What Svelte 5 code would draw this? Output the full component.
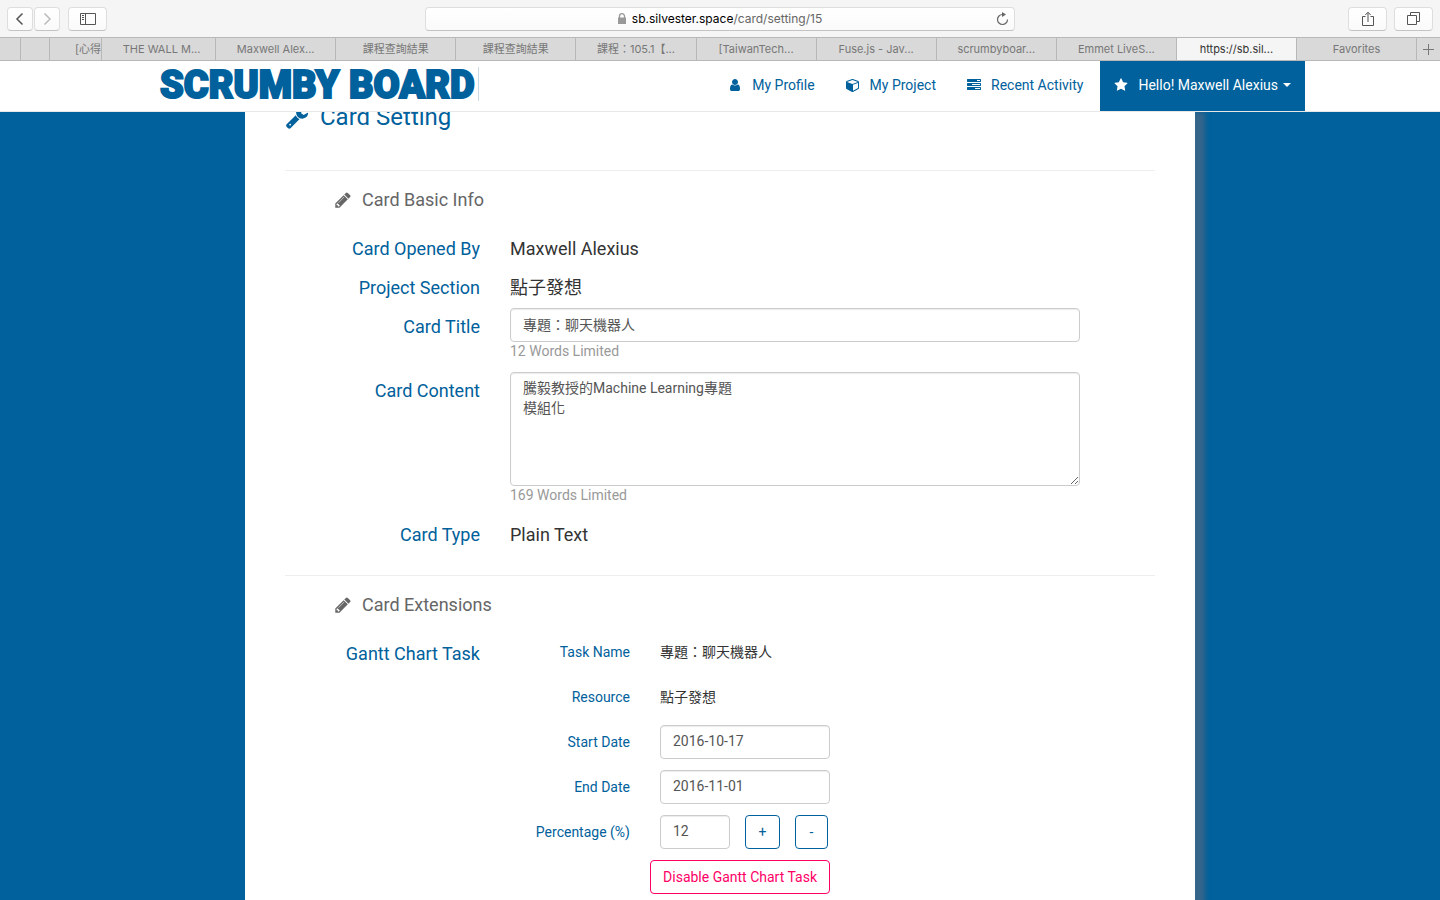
<script>
  const tabs = [
    { text: '課程查詢結果' },
    { text: '課程查詢結果' },
    { text: '課程：105.1【...' },
    { text: '[TaiwanTech...' },
    { text: 'Fuse.js - Jav...' },
    { text: 'scrumbyboar...' },
    { text: 'Emmet LiveS...' },
    { text: 'https://sb.sil...', active: true },
    { text: 'Favorites' }
  ];
  let title = $state('專題：聊天機器人');
  let content = $state('騰毅教授的Machine Learning專題\n模組化');
  let start = $state('2016-10-17');
  let end = $state('2016-11-01');
  let percent = $state(12);

  const icons = {
    user: 'M1280 1399q0 109-62.5 187t-150.5 78h-854q-88 0-150.5-78t-62.5-187q0-85 8.5-160.5t31.5-152 58.5-131 94-89 134.5-34.5q131 128 313 128t313-128q76 0 134.5 34.5t94 89 58.5 131 31.5 152 8.5 160.5zm-256-887q0 159-112.5 271.5t-271.5 112.5-271.5-112.5-112.5-271.5 112.5-271.5 271.5-112.5 271.5 112.5 112.5 271.5z',
    cube: 'M896 1629l640-349v-636l-640 233v752zm-64-865l698-254-698-254-698 254zm832-252v768q0 35-18 65t-49 47l-704 384q-28 16-61 16t-61-16l-704-384q-31-17-49-47t-18-65v-768q0-40 23-73t61-47l704-256q22-8 44-8t44 8l704 256q38 14 61 47t23 73z',
    tasks: 'M1024 1408h640v-128h-640v128zm-384-512h1024v-128h-1024v128zm640-512h384v-128h-384v128zm512 832v256q0 26-19 45t-45 19h-1664q-26 0-45-19t-19-45v-256q0-26 19-45t45-19h1664q26 0 45 19t19 45zm0-512v256q0 26-19 45t-45 19h-1664q-26 0-45-19t-19-45v-256q0-26 19-45t45-19h1664q26 0 45 19t19 45zm0-512v256q0 26-19 45t-45 19h-1664q-26 0-45-19t-19-45v-256q0-26 19-45t45-19h1664q26 0 45 19t19 45z',
    star: 'M1728 647q0 22-26 48l-363 354 86 500q1 7 1 20 0 21-10.5 35.5t-30.5 14.5q-19 0-40-12l-449-236-449 236q-22 12-40 12-21 0-31.5-14.5t-10.5-35.5q0-6 2-20l86-500-364-354q-25-27-25-48 0-37 56-46l502-73 225-455q19-41 49-41t49 41l225 455 502 73q56 9 56 46z',
    pencil: 'M491 1536l91-91-235-235-91 91v107h128v128h107zm523-928q0-22-22-22-10 0-17 7l-542 542q-7 7-7 17 0 22 22 22 10 0 17-7l542-542q7-7 7-17zm-54-192l416 416-832 832h-416v-416zm683 96q0 53-37 90l-166 166-416-416 166-165q36-38 90-38 53 0 91 38l235 234q37 39 37 91z',
    wrench: 'M448 1472q0-26-19-45t-45-19-45 19-19 45 19 45 45 19 45-19 19-45zm644-420l-682 682q-37 37-90 37-52 0-91-37l-106-108q-38-36-38-90 0-53 38-91l681-681q39 98 114.5 173.5t173.5 114.5zm634-435q0 39-23 106-47 134-164.5 217.5t-258.5 83.5q-185 0-316.5-131.5t-131.5-316.5 131.5-316.5 316.5-131.5q58 0 121.5 16.5t107.5 46.5q16 11 16 28t-16 28l-293 169v224l193 107q5-3 79-48.5t135.5-81 70.5-35.5q15 0 23.5 10t8.5 25z'
  };
</script>

{#snippet icon(name, size, width = 1792)}
  <svg class="icon" height={size} width={Math.round((size * width) / 1792)} viewBox="0 0 {width} 1792" aria-hidden="true">
    <path d={icons[name]} fill="currentColor" />
  </svg>
{/snippet}

<div class="window">
  <div class="toolbar">
    <div class="tools">
      <div class="pair">
        <button class="tool" aria-label="Back">
          <svg width="10" height="14" viewBox="0 0 10 14"><path d="M7.5 1.5 2 7l5.500 5.500" fill="none" stroke="#555" stroke-width="1.500" /></svg>
        </button>
        <button class="tool" aria-label="Forward">
          <svg width="10" height="14" viewBox="0 0 10 14"><path d="M2.500 1.500 8 7l-5.500 5.500" fill="none" stroke="#bbb" stroke-width="1.500" /></svg>
        </button>
      </div>
      <button class="tool wide" aria-label="Sidebar">
        <svg width="16" height="12" viewBox="0 0 16 12" fill="none" stroke="#555">
          <path d="M.5.5h15v11H.5zM5.500.5v11M2 2.500h2M2 4.500h2M2 6.500h2" />
        </svg>
      </button>
    </div>
    <div class="address">
      <button class="url">
        <svg width="8" height="11" viewBox="0 0 8 11"><path d="M1.500 5V3.200a2.500 2.500 0 0 1 5 0V5" fill="none" stroke="#999" stroke-width="1.300" /><path d="M0 4.500h8V11H0z" fill="#999" /></svg>
        <span><b>sb.silvester.space</b>/card/setting/15</span>
      </button>
      <button class="reload" aria-label="Reload">
        <svg width="13" height="14" viewBox="0 0 13 14"><path d="M6.500 2.500a5 5 0 1 0 5 5" fill="none" stroke="#666" stroke-width="1.200" /><path d="M6 0l4 2.500L6 5z" fill="#666" /></svg>
      </button>
    </div>
    <div class="tools end">
      <button class="tool wide" aria-label="Share">
        <svg width="12" height="16" viewBox="0 0 12 16" fill="none" stroke="#555"><path d="M3.500 5.500h-3v9h11v-9h-3M6 11V1.500M3.300 4 6 1.200 8.700 4" /></svg>
      </button>
      <button class="tool wide" aria-label="Show all tabs">
        <svg width="13" height="13" viewBox="0 0 13 13" fill="none" stroke="#555"><path d="M.5 3.500h9v9h-9zM3.500 3.500v-3h9v9h-3" /></svg>
      </button>
    </div>
  </div>

  <div class="tabs">
    <button class="tab s1" aria-label="Stacked tab"></button>
    <button class="tab s2" aria-label="Stacked tab"></button>
    <button class="tab s3">[心得</button>
    <button class="tab first">THE WALL M...</button>
    <button class="tab">Maxwell Alex...</button>
    {#each tabs as tab}
      <button class="tab" class:active={tab.active}>{tab.text}</button>
    {/each}
    <button class="plus" aria-label="New tab">
      <svg width="11" height="11" viewBox="0 0 11 11"><path d="M5.500 0v11M0 5.500h11" stroke="#777" /></svg>
    </button>
  </div>

  <header class="navbar">
    <div class="nav-inner">
      <a class="brand" href="#home">SCRUMBY BOARD</a>
      <nav>
        <a href="#profile"><span class="slot">{@render icon('user', 14, 1280)}</span>My Profile</a>
        <a href="#project"><span class="slot">{@render icon('cube', 14)}</span>My Project</a>
        <a href="#activity"><span class="slot">{@render icon('tasks', 14)}</span>Recent Activity</a>
        <a class="hello" href="#account"><span class="slot">{@render icon('star', 14)}</span>Hello! Maxwell Alexius<i class="caret"></i></a>
      </nav>
    </div>
  </header>

  <div class="page">
    <main class="sheet">
      <h1>{@render icon('wrench', 24)}Card Setting</h1>
      <hr />
      <h2>{@render icon('pencil', 18)}Card Basic Info</h2>
      <div class="row">
        <span class="label">Card Opened By</span>
        <span class="value">Maxwell Alexius</span>
      </div>
      <div class="row">
        <span class="label">Project Section</span>
        <span class="value">點子發想</span>
      </div>
      <div class="row tall">
        <label class="label" for="title">Card Title</label>
        <div>
          <input id="title" type="text" bind:value={title} />
          <p class="hint">12 Words Limited</p>
        </div>
      </div>
      <div class="row tall">
        <label class="label" for="content">Card Content</label>
        <div>
          <textarea id="content" rows="5" bind:value={content}></textarea>
          <p class="hint">169 Words Limited</p>
        </div>
      </div>
      <div class="row">
        <span class="label">Card Type</span>
        <span class="value">Plain Text</span>
      </div>
      <hr class="second" />
      <h2>{@render icon('pencil', 18)}Card Extensions</h2>
      <div class="row">
        <span class="label">Gantt Chart Task</span>
        <div class="task">
          <span class="sub">Task Name</span>
          <span class="text">專題：聊天機器人</span>
          <span class="sub">Resource</span>
          <span class="text">點子發想</span>
          <label class="sub" for="start">Start Date</label>
          <input id="start" type="text" bind:value={start} />
          <label class="sub" for="end">End Date</label>
          <input id="end" type="text" bind:value={end} />
          <label class="sub" for="percent">Percentage (%)</label>
          <div class="percent">
            <input id="percent" type="text" bind:value={percent} />
            <button class="btn" onclick={() => percent++}>+</button>
            <button class="btn" onclick={() => percent--}>-</button>
          </div>
          <div class="actions"><button class="btn danger">Disable Gantt Chart Task</button></div>
        </div>
      </div>
    </main>
  </div>
</div>

<style>
  :global(body) { background: #00619c; overflow: hidden; }
  .window {
    height: 100vh;
    display: flex;
    flex-direction: column;
    font: 14px/20px Roboto, 'Noto Sans CJK TC', sans-serif;
    color: #333;
  }
  * { box-sizing: border-box; }
  button, input, textarea { font: inherit; margin: 0; }
  svg { display: block; flex: none; }
  a { text-decoration: none; }

  .toolbar {
    flex: none;
    display: grid;
    grid-template-columns: 1fr minmax(0, 590px) 1fr;
    align-items: center;
    height: 38px;
    padding: 0 7px;
    background: #f5f5f5;
    border-bottom: 1px solid #b8b8b8;
    font-family: Inter, sans-serif;
  }
  .tools { display: flex; gap: 8px; }
  .end { justify-content: flex-end; gap: 7px; }
  .pair { display: flex; gap: 1px; }
  .tool, .address {
    height: 24px;
    background: linear-gradient(#fff, #fafafa);
    border: 1px solid #dedede;
    border-bottom-color: #c4c4c4;
    border-radius: 4px;
  }
  .tool { width: 26px; padding: 0; display: flex; align-items: center; justify-content: center; }
  .wide { width: 39px; }
  .address { display: flex; align-items: center; }
  .url {
    flex: 1;
    display: flex;
    justify-content: center;
    align-items: center;
    gap: 6px;
    padding: 0 0 0 24px;
    border: 0;
    background: none;
    font-size: 12px;
    color: #666;
  }
  .url b { font-weight: 400; color: #000; }
  .reload { width: 24px; padding: 0 5px 0 6px; border: 0; background: none; }

  .tabs { flex: none; display: flex; height: 23px; background: #d9d9d9; border-bottom: 1px solid #b8b8b8; }
  .tab {
    flex: 120 1 0;
    min-width: 0;
    padding: 0;
    border: 0;
    border-right: 1px solid #b8b8b8;
    background: none;
    color: #777;
    font: 11px/22px Inter, 'Noto Sans CJK TC', sans-serif;
    white-space: nowrap;
    overflow: hidden;
  }
  .s1 { flex: 0 0 21px; }
  .s2 { flex: 0 0 29px; }
  .s3 { flex: 0 0 52px; text-align: right; }
  .first { flex-grow: 114; text-indent: 6px; }
  .active { background: #f5f5f5; color: #333; }
  .plus { flex: 0 0 23px; padding: 0; border: 0; background: none; display: flex; align-items: center; justify-content: center; }

  .navbar { flex: none; background: #fff; border-bottom: 1px solid #e7e7e7; }
  .nav-inner { max-width: 1170px; margin: 0 auto; padding: 0 0 0 25px; display: flex; justify-content: space-between; height: 50px; }
  .brand {
    align-self: center;
    height: 34px;
    margin-bottom: 4px;
    padding-right: 3px;
    border-right: 1px solid #c9dbe6;
    color: #00619c;
    font: 900 38px/36px Roboto, sans-serif;
    -webkit-text-stroke: 2px #00619c;
    white-space: nowrap;
  }
  nav { display: flex; }
  nav a { display: flex; align-items: center; padding: 0 17px 2px 13px; color: #00619c; white-space: nowrap; }
  .slot { width: 16px; margin-right: 9px; display: flex; justify-content: center; }
  nav .hello { padding-right: 14px; background: #00619c; color: #fff; }
  .caret { margin-left: 5px; border: 4px solid transparent; border-top-color: #fff; border-bottom: 0; }

  .page { flex: 1; min-height: 0; overflow: hidden; }
  .sheet {
    max-width: 950px;
    min-height: 100%;
    margin: 0 auto;
    padding: 0 40px;
    background: #fff;
    box-shadow: 10px 0 5px #36658a;
    display: flow-root;
  }
  h1, h2 { display: flex; align-items: center; font-weight: 400; }
  h1 { gap: 11px; margin: -10px 0 38px; font-size: 24px; line-height: 30px; color: #00619c; }
  hr { margin: 0; border: 0; border-top: 1px solid #eee; }
  h2 { gap: 10px; margin: 19px 0 29px; padding-left: 49px; font-size: 18px; line-height: 20px; color: #666; }
  .second { margin-top: 30px; }
  .row {
    display: grid;
    grid-template-columns: 195px minmax(0, 570px);
    column-gap: 30px;
    margin-bottom: 19px;
  }
  .label, .value { font-size: 18px; line-height: 20px; }
  .label { text-align: right; color: #00619c; }
  .value { color: #333; }
  .tall { margin: -9px 0 11px; }
  .tall .label { padding-top: 9px; }
  .tall + .row:not(.tall) { margin-top: 20px; }
  .tall + .tall { margin-top: 0; }
  input, textarea {
    display: block;
    width: 100%;
    height: 34px;
    padding: 5px 12px 7px;
    border: 1px solid #ccc;
    border-radius: 4px;
    background: #fff;
    box-shadow: inset 0 1px 1px rgba(0, 0, 0, .08);
    color: #555;
  }
  textarea { height: 114px; resize: vertical; }
  .hint { margin: -1px 0 0; color: #999; }

  .task {
    display: grid;
    grid-template-columns: 120px 170px;
    grid-auto-rows: 34px;
    column-gap: 30px;
    row-gap: 11px;
    align-items: center;
    margin-top: -9px;
  }
  .sub { text-align: right; color: #00619c; }
  .percent { display: grid; grid-template-columns: 70px 35px 33px; column-gap: 15px; }
  .btn { height: 34px; padding: 0 11px; border: 1px solid #00619c; border-radius: 4px; background: #fff; color: #00619c; white-space: nowrap; }
  .actions { grid-column: 1 / -1; display: flex; justify-content: flex-end; }
  .danger { padding: 0 12px; border-color: #ff0066; color: #ff0066; }
</style>
